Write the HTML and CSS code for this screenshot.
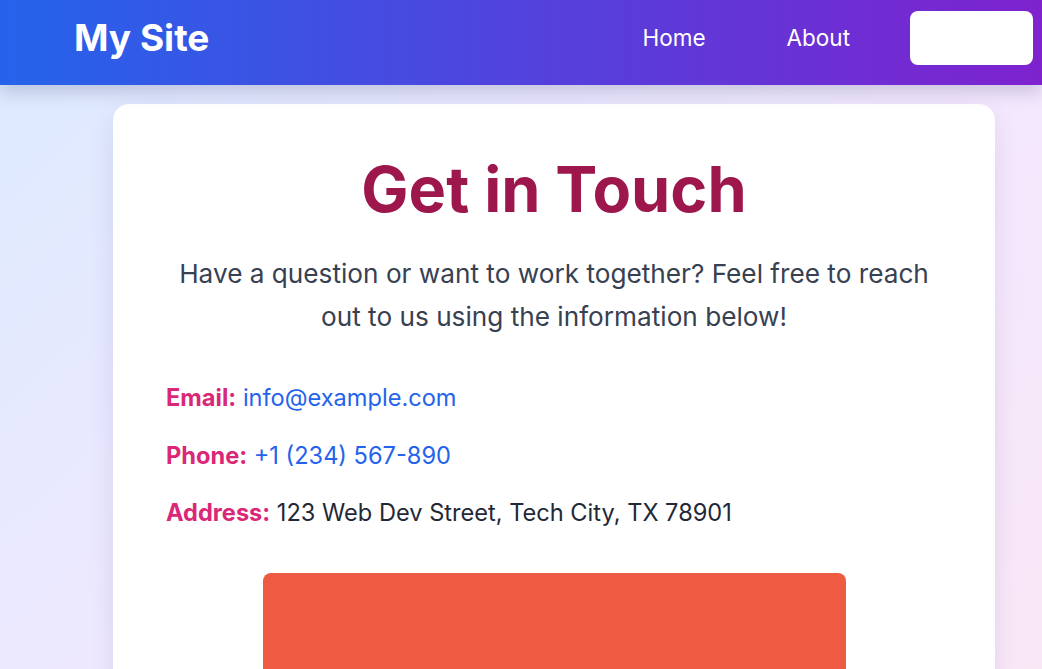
FILE: index.html
```html
<!DOCTYPE html>
<html lang="en">
<head>
<meta charset="utf-8">
<title>Contact - My Site</title>
<link rel="stylesheet" href="styles.css">
</head>
<body>
<header class="site-header">
  <div class="brand">My Site</div>
  <nav class="nav">
    <a class="nav-link" href="#">Home</a>
    <a class="nav-link nav-link-last" href="#">About</a>
    <a class="nav-button" href="#">Contact</a>
  </nav>
</header>
<main class="main">
  <section class="card">
    <h1 class="title">Get in Touch</h1>
    <p class="lead">Have a question or want to work together? Feel free to reach out to us using the information below!</p>
    <ul class="contact-list">
      <li><span class="label">Email:</span> <a class="link" href="#">info@example.com</a></li>
      <li><span class="label">Phone:</span> <a class="link" href="#">+1 (234) 567-890</a></li>
      <li><span class="label">Address:</span> <span class="plain">123 Web Dev Street, Tech City, TX 78901</span></li>
    </ul>
    <div class="map"></div>
  </section>
</main>
</body>
</html>
```

FILE: styles.css
```css
* { box-sizing: border-box; }
html, body { margin: 0; padding: 0; }
body {
  font-family: Inter, "Noto Sans", sans-serif;
  min-height: 900px;
  background: linear-gradient(to bottom right, #dbeafe, #f3e8ff, #fce7f3);
}
.site-header {
  height: 85px;
  display: flex;
  align-items: flex-start;
  justify-content: space-between;
  padding: 11px 9px 0 74px;
  background: linear-gradient(to right, #2563eb, #7e22ce);
  box-shadow: 0 8px 16px rgba(40, 40, 90, 0.18);
  position: relative;
  z-index: 1;
}
.brand {
  color: #fff;
  font-size: 37px;
  line-height: 54px;
  font-weight: 700;
}
.nav {
  display: flex;
  align-items: center;
}
.nav-link {
  color: #fff;
  text-decoration: none;
  font-size: 22.5px;
  line-height: 54px;
  margin-right: 81px;
}
.nav-link-last { margin-right: 60px; }
.nav-button {
  display: flex;
  align-items: center;
  justify-content: center;
  width: 123px;
  height: 54px;
  margin-top: -1px;
  background: #fff;
  border-radius: 8px;
  color: #fff;
  font-size: 20px;
  text-decoration: none;
}
.main {
  padding: 19px 47px 40px 113px;
}
.card {
  background: #fff;
  border-radius: 16px;
  padding: 54px 53px 40px;
  box-shadow: 0 10px 25px rgba(80, 60, 150, 0.12);
  min-height: 700px;
}
.title {
  margin: 0;
  text-align: center;
  font-size: 63px;
  line-height: 1;
  font-weight: 700;
  color: #9d174d;
}
.lead {
  margin: 31px 0 0;
  text-align: center;
  font-size: 26.2px;
  line-height: 43px;
  color: #374151;
}
.contact-list {
  list-style: none;
  margin: 43px 0 0;
  padding: 0;
}
.contact-list li {
  font-size: 23.6px;
  line-height: 34px;
  margin-bottom: 23.5px;
  color: #1f2937;
}
.label {
  font-weight: 700;
  color: #db2777;
}
.link {
  color: #2563eb;
  text-decoration: none;
}
.map {
  width: 583px;
  height: 300px;
  margin: 43px auto 0;
  background: #ef5a42;
  border-radius: 8px;
}
```
